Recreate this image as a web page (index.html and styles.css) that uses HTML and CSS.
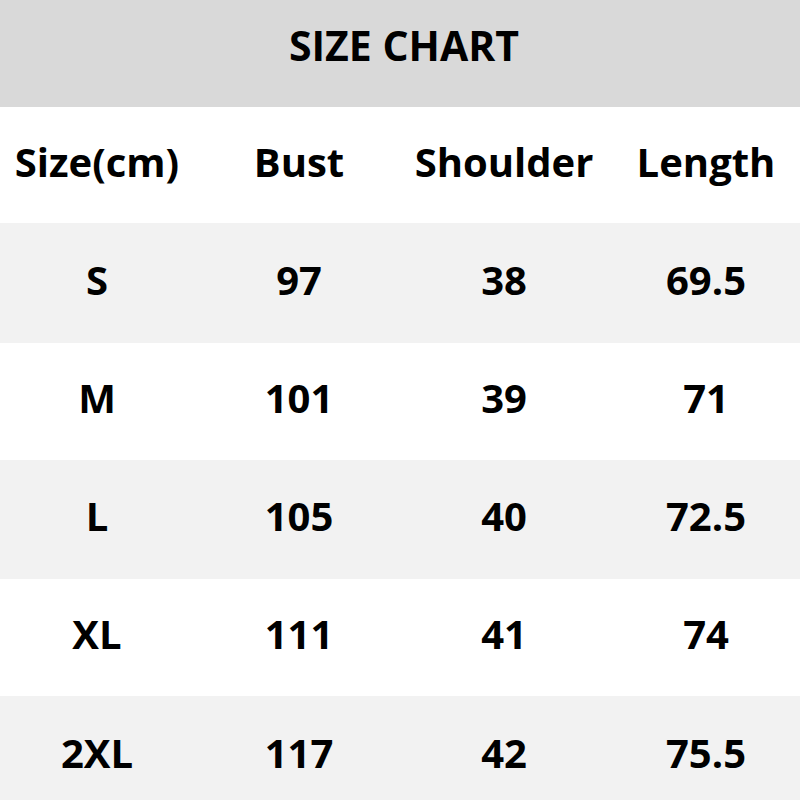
FILE: index.html
```html
<!DOCTYPE html>
<html>
<head>
<meta charset="utf-8">
<link rel="stylesheet" href="styles.css">
</head>
<body>
<div class="chart">
  <div class="title">SIZE CHART</div>
  <div class="row head"><div>Size(cm)</div><div>Bust</div><div>Shoulder</div><div>Length</div></div>
  <div class="row gray r1"><div>S</div><div>97</div><div>38</div><div>69.5</div></div>
  <div class="row r2"><div>M</div><div>101</div><div>39</div><div>71</div></div>
  <div class="row gray r3"><div>L</div><div>105</div><div>40</div><div>72.5</div></div>
  <div class="row r4"><div>XL</div><div>111</div><div>41</div><div>74</div></div>
  <div class="row gray r5"><div>2XL</div><div>117</div><div>42</div><div>75.5</div></div>
</div>
</body>
</html>
```
FILE: styles.css
```css
html, body {
  margin: 0;
  padding: 0;
  background: #ffffff;
}
.chart {
  width: 800px;
  height: 800px;
  overflow: hidden;
  display: grid;
  grid-template-rows: 107px 116px 120px 117px 119px 117px 120px;
  font-family: "Open Sans", "Noto Sans", sans-serif;
  font-weight: 700;
  color: #000;
}
.title {
  background: #d9d9d9;
  display: flex;
  align-items: center;
  justify-content: center;
  font-size: 41px;
  padding-bottom: 18px;
  box-sizing: border-box;
}
.row {
  display: grid;
  grid-template-columns: 194px 210px 200px 204px;
  align-items: center;
  font-size: 40px;
  padding-bottom: 8px;
  box-sizing: border-box;
}
.row > div {
  text-align: center;
  white-space: nowrap;
}
.head {
  background: #ffffff;
}
.gray {
  background: #f2f2f2;
}
```
